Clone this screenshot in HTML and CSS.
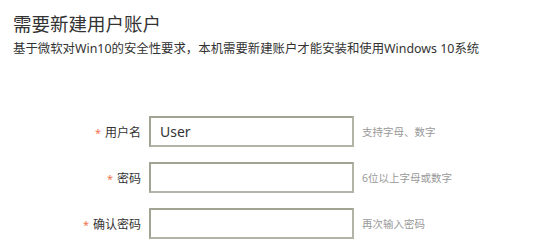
FILE: index.html
```html
<!DOCTYPE html>
<html lang="zh-CN">
<head>
<meta charset="utf-8">
<link rel="stylesheet" href="styles.css">
</head>
<body>
<div class="page">
  <h1 class="title">需要新建用户账户</h1>
  <p class="desc">基于微软对Win10的安全性要求，本机需要新建账户才能安装和使用Windows 10系统</p>
  <div class="form">
    <label class="label"><span class="req">*</span>用户名</label>
    <div class="input">User</div>
    <span class="hint">支持字母、数字</span>

    <label class="label"><span class="req">*</span>密码</label>
    <div class="input"></div>
    <span class="hint">6位以上字母或数字</span>

    <label class="label"><span class="req">*</span>确认密码</label>
    <div class="input"></div>
    <span class="hint">再次输入密码</span>
  </div>
</div>
</body>
</html>
```
FILE: styles.css
```css
html, body {
  margin: 0;
  padding: 0;
  background: #fff;
}
.page {
  width: 554px;
  height: 242px;
  overflow: hidden;
  padding: 11px 0 0 13px;
  box-sizing: border-box;
  font-family: "Noto Sans", "Noto Sans CJK SC", sans-serif;
  color: #333;
}
.title {
  margin: 0;
  font-size: 18.5px;
  font-weight: normal;
  line-height: 26px;
  color: #333;
}
.desc {
  margin: 3px 0 0;
  font-size: 12.4px;
  line-height: 18px;
  color: #333;
}
.form {
  display: grid;
  grid-template-columns: 128px 205px auto;
  column-gap: 8px;
  row-gap: 15px;
  align-items: center;
  margin-top: 58px;
}
.label {
  justify-self: end;
  font-size: 12px;
  color: #333;
}
.req {
  color: #f2734f;
  margin-right: 4px;
  font-size: 11px;
}
.input {
  height: 31px;
  box-sizing: border-box;
  border: 2px solid #b4b4a6;
  border-top-color: #a3a394;
  border-left-color: #a3a394;
  padding-left: 9px;
  font-size: 14px;
  line-height: 27px;
  color: #333;
}
.hint {
  font-size: 10.5px;
  color: #999;
}
```
